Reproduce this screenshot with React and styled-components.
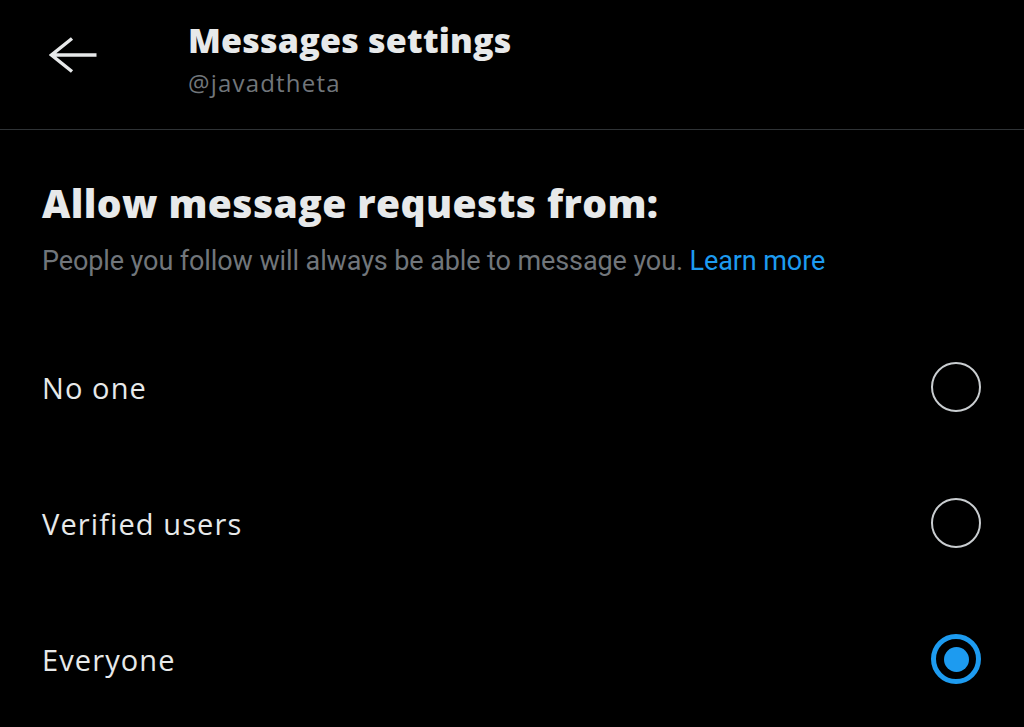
import React, { useState } from 'react';
import styled, { createGlobalStyle } from 'styled-components';

const GlobalStyle = createGlobalStyle`
  html, body {
    margin: 0;
    padding: 0;
    background: #000;
  }
  #root {
    min-height: 100vh;
    background: #000;
  }
`;

const Page = styled.div`
  font-family: 'Open Sans', Roboto, 'Liberation Sans', sans-serif;
  color: #e7e9ea;
  background: #000;
`;

const Header = styled.header`
  display: flex;
  align-items: flex-start;
  height: 130px;
  box-sizing: border-box;
  padding-top: 19px;
  border-bottom: 1px solid #2f3336;
`;

const BackButton = styled.button`
  width: 188px;
  flex-shrink: 0;
  display: flex;
  align-items: flex-start;
  padding: 16px 0 0 49px;
  margin: 0;
  background: none;
  border: 0;
  box-sizing: border-box;
  cursor: pointer;
`;

const TitleBlock = styled.div`
  display: flex;
  flex-direction: column;
`;

const Title = styled.h1`
  margin: 0;
  font-size: 34px;
  line-height: 42px;
  font-weight: 800;
  letter-spacing: 0.2px;
  color: #e7e9ea;
`;

const Handle = styled.span`
  margin-top: 7px;
  font-size: 24px;
  line-height: 30px;
  letter-spacing: 1.2px;
  color: #71767b;
`;

const Section = styled.section`
  padding: 49px 43px 0 42px;
`;

const Heading = styled.h2`
  margin: 0;
  font-size: 39px;
  line-height: 48px;
  font-weight: 800;
  letter-spacing: 0.4px;
  color: #e7e9ea;
`;

const Sub = styled.p`
  margin: 17px 0 0;
  font-family: Roboto, 'Liberation Sans', sans-serif;
  font-size: 27px;
  line-height: 34px;
  letter-spacing: -0.1px;
  color: #71767b;
`;

const Link = styled.a`
  color: #1d9bf0;
  text-decoration: none;
`;

const Options = styled.div`
  margin-top: 41px;
  display: flex;
  flex-direction: column;
`;

const Row = styled.label`
  display: flex;
  align-items: center;
  justify-content: space-between;
  height: 136px;
  cursor: pointer;
`;

const Label = styled.span`
  font-size: 29px;
  letter-spacing: 1.1px;
  color: #e7e9ea;
`;

const Radio = styled.span`
  width: 50px;
  height: 50px;
  box-sizing: border-box;
  border-radius: 50%;
  border: ${({ checked }) => (checked ? '5px solid #1d9bf0' : '2.5px solid #c9cdd0')};
  display: flex;
  align-items: center;
  justify-content: center;
`;

const Dot = styled.span`
  width: 25px;
  height: 25px;
  border-radius: 50%;
  background: #1d9bf0;
`;

const Divider = styled.div`
  border-top: 1px solid #2f3336;
  margin: 0 -43px 0 -42px;
`;

const BackArrow = () => (
  <svg width="48" height="40" viewBox="0 0 48 40" fill="none">
    <path
      d="M23 3.5 L2.5 20 L23 36.5 M2.5 20 H47.5"
      stroke="#e7e9ea"
      strokeWidth="3.4"
      strokeLinejoin="miter"
    />
  </svg>
);

const choices = ['No one', 'Verified users', 'Everyone'];

export default function App() {
  const [selected, setSelected] = useState('Everyone');

  return (
    <Page>
      <GlobalStyle />
      <Header>
        <BackButton aria-label="Back">
          <BackArrow />
        </BackButton>
        <TitleBlock>
          <Title>Messages settings</Title>
          <Handle>@javadtheta</Handle>
        </TitleBlock>
      </Header>
      <Section>
        <Heading>Allow message requests from:</Heading>
        <Sub>
          People you follow will always be able to message you. <Link href="#">Learn more</Link>
        </Sub>
        <Options>
          {choices.map((c) => (
            <Row key={c} onClick={() => setSelected(c)}>
              <Label>{c}</Label>
              <Radio checked={selected === c}>{selected === c && <Dot />}</Radio>
            </Row>
          ))}
        </Options>
        <Divider />
      </Section>
    </Page>
  );
}
